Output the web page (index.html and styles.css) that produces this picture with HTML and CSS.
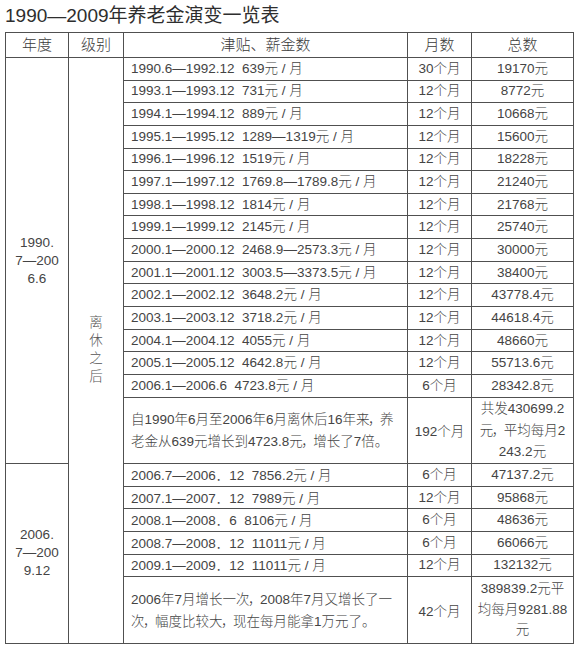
FILE: index.html
```html
<!DOCTYPE html>
<html lang="zh-CN">
<head>
<meta charset="utf-8">
<title>1990—2009年养老金演变一览表</title>
<link rel="stylesheet" href="styles.css">
</head>
<body>
<div class="page">
  <h1 class="title">1990—2009年养老金演变一览表</h1>
  <table class="grid">
    <colgroup>
      <col class="c1"><col class="c2"><col class="c3"><col class="c4"><col class="c5">
    </colgroup>
    <thead>
      <tr class="head">
        <th>年度</th><th>级别</th><th>津贴、薪金数</th><th>月数</th><th>总数</th>
      </tr>
    </thead>
    <tbody>
      <tr class="r">
        <td class="period" rowspan="16">1990.<br>7—200<br>6.6</td>
        <td class="level" rowspan="22">离<br>休<br>之<br>后</td>
        <td class="pay">1990.6—1992.12&nbsp; 639元 / 月</td><td class="num">30个月</td><td class="num">19170元</td>
      </tr>
      <tr class="r"><td class="pay">1993.1—1993.12&nbsp; 731元 / 月</td><td class="num">12个月</td><td class="num">8772元</td></tr>
      <tr class="r"><td class="pay">1994.1—1994.12&nbsp; 889元 / 月</td><td class="num">12个月</td><td class="num">10668元</td></tr>
      <tr class="r"><td class="pay">1995.1—1995.12&nbsp; 1289—1319元 / 月</td><td class="num">12个月</td><td class="num">15600元</td></tr>
      <tr class="r"><td class="pay">1996.1—1996.12&nbsp; 1519元 / 月</td><td class="num">12个月</td><td class="num">18228元</td></tr>
      <tr class="r"><td class="pay">1997.1—1997.12&nbsp; 1769.8—1789.8元 / 月</td><td class="num">12个月</td><td class="num">21240元</td></tr>
      <tr class="r"><td class="pay">1998.1—1998.12&nbsp; 1814元 / 月</td><td class="num">12个月</td><td class="num">21768元</td></tr>
      <tr class="r"><td class="pay">1999.1—1999.12&nbsp; 2145元 / 月</td><td class="num">12个月</td><td class="num">25740元</td></tr>
      <tr class="r"><td class="pay">2000.1—2000.12&nbsp; 2468.9—2573.3元 / 月</td><td class="num">12个月</td><td class="num">30000元</td></tr>
      <tr class="r"><td class="pay">2001.1—2001.12&nbsp; 3003.5—3373.5元 / 月</td><td class="num">12个月</td><td class="num">38400元</td></tr>
      <tr class="r"><td class="pay">2002.1—2002.12&nbsp; 3648.2元 / 月</td><td class="num">12个月</td><td class="num">43778.4元</td></tr>
      <tr class="r"><td class="pay">2003.1—2003.12&nbsp; 3718.2元 / 月</td><td class="num">12个月</td><td class="num">44618.4元</td></tr>
      <tr class="r"><td class="pay">2004.1—2004.12&nbsp; 4055元 / 月</td><td class="num">12个月</td><td class="num">48660元</td></tr>
      <tr class="r"><td class="pay">2005.1—2005.12&nbsp; 4642.8元 / 月</td><td class="num">12个月</td><td class="num">55713.6元</td></tr>
      <tr class="r"><td class="pay">2006.1—2006.6&nbsp; 4723.8元 / 月</td><td class="num">6个月</td><td class="num">28342.8元</td></tr>
      <tr class="sum">
        <td class="note">自1990年6月至2006年6月离休后16年来<span class="cm">，</span>养<br>老金从639元增长到4723.8元<span class="cm">，</span>增长了7倍。</td>
        <td class="num">192个月</td>
        <td class="num multi">共发430699.2<br>元<span class="cm">，</span>平均每月2<br>243.2元</td>
      </tr>
      <tr class="r">
        <td class="period" rowspan="6">2006.<br>7—200<br>9.12</td>
        <td class="pay">2006.7—2006<span class="dot">．</span>12&nbsp; 7856.2元 / 月</td><td class="num">6个月</td><td class="num">47137.2元</td>
      </tr>
      <tr class="r"><td class="pay">2007.1—2007<span class="dot">．</span>12&nbsp; 7989元 / 月</td><td class="num">12个月</td><td class="num">95868元</td></tr>
      <tr class="r"><td class="pay">2008.1—2008<span class="dot">．</span>6&nbsp; 8106元 / 月</td><td class="num">6个月</td><td class="num">48636元</td></tr>
      <tr class="r"><td class="pay">2008.7—2008<span class="dot">．</span>12&nbsp; 11011元 / 月</td><td class="num">6个月</td><td class="num">66066元</td></tr>
      <tr class="r"><td class="pay">2009.1—2009<span class="dot">．</span>12&nbsp; 11011元 / 月</td><td class="num">12个月</td><td class="num">132132元</td></tr>
      <tr class="sum">
        <td class="note">2006年7月增长一次<span class="cm">，</span>2008年7月又增长了一<br>次<span class="cm">，</span>幅度比较大<span class="cm">，</span>现在每月能拿1万元了。</td>
        <td class="num">42个月</td>
        <td class="num multi">389839.2元平<br>均每月9281.88<br>元</td>
      </tr>
    </tbody>
  </table>
</div>
</body>
</html>
```
FILE: styles.css
```css
html, body {
  margin: 0;
  padding: 0;
  background: #ffffff;
}

.page {
  padding: 0 0 0 5px;
  font-family: "Liberation Sans", "Noto Sans CJK SC", sans-serif;
  color: #444444;
}

.title {
  margin: 0;
  height: 32px;
  font-size: 19px;
  line-height: 32px;
  font-weight: normal;
  color: #2e2e2e;
  white-space: nowrap;
}

.grid {
  border-collapse: collapse;
  table-layout: fixed;
  width: 569px;
  font-size: 13.5px;
  font-weight: 300;
}

.c1 { width: 63px; }
.c2 { width: 55px; }
.c3 { width: 284px; }
.c4 { width: 64px; }
.c5 { width: 102px; }

.grid th,
.grid td {
  border: 1px solid #505050;
  padding: 0;
  vertical-align: middle;
  white-space: nowrap;
}

.head {
  height: 25px;
}

.head th {
  font-size: 15px;
  font-weight: 300;
  color: #3a3a3a;
  text-align: center;
  line-height: 18px;
}

.r {
  height: 22.65px;
}

.r td {
  line-height: 18px;
}

.sum {
  height: 66.5px;
}

.pay {
  padding-left: 7px !important;
  text-align: left;
}

.num {
  text-align: center;
}

.multi {
  line-height: 20.5px;
}

.note {
  padding-left: 7px !important;
  text-align: left;
  line-height: 21.5px;
}

.period {
  text-align: center;
  line-height: 21px;
}

.level {
  text-align: center;
  line-height: 22px;
  color: #555555;
}

.cm {
  font-family: "Noto Sans CJK TC", sans-serif;
  margin: 0 -1.5px;
}

.dot {
  font-family: "Noto Sans CJK TC", sans-serif;
}
```
